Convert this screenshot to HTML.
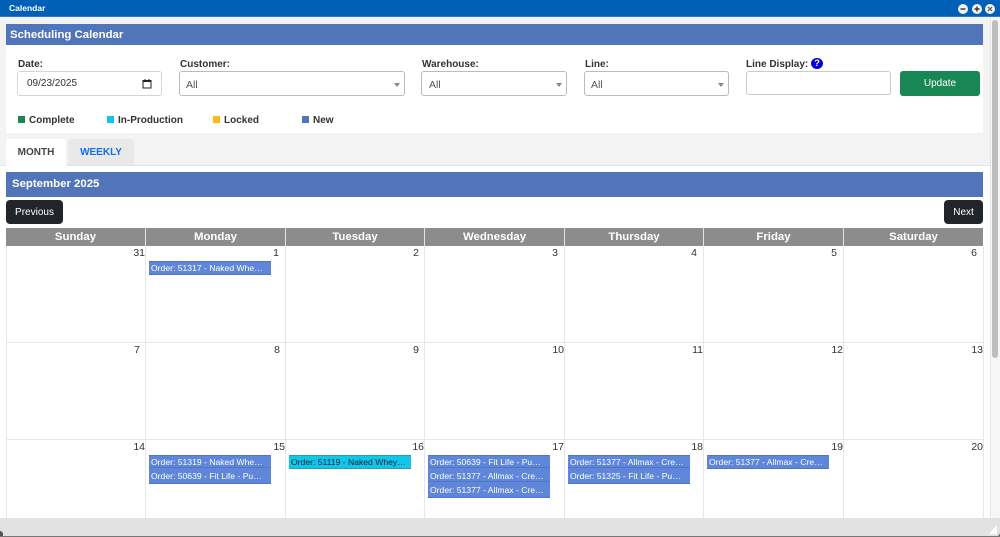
<!DOCTYPE html>
<html><head><meta charset="utf-8"><title>Calendar</title>
<style>
*{box-sizing:border-box}
html,body{margin:0;padding:0;width:1000px;height:537px;overflow:hidden;background:#fff;font-family:"Liberation Sans",sans-serif;color:#212529}
.a{position:absolute}
.lbl{position:absolute;font-size:10px;font-weight:bold;color:#333;top:58px;line-height:13px}
.inp{position:absolute;top:71px;height:25px;background:#fff;border:1px solid #d4d4d4;border-radius:3px;font-size:10.5px;color:#555;line-height:25px;padding-left:6px}
.sel{border-color:#bbb;line-height:26px}
.sel:after{content:"";position:absolute;right:4px;top:11px;border-left:3px solid transparent;border-right:3px solid transparent;border-top:4px solid #888}
.sw{position:absolute;top:116px;width:7px;height:7px}
.lg{position:absolute;top:114px;font-size:10px;font-weight:bold;color:#333;line-height:13px}
.hd{position:absolute;top:228px;height:18px;background:#8c8c8c;color:#fff;font-weight:bold;font-size:11.4px;text-align:center;line-height:19px;border-right:1px solid #e4e4e4}
.v{position:absolute;width:1px;top:246px;height:272px;background:#e6e6e6}
.h{position:absolute;left:6px;width:977px;height:1px;background:#e6e6e6}
.d{position:absolute;width:40px;text-align:right;font-size:10.5px;color:#333;line-height:13px}
.e{position:absolute;width:122px;height:14px;background:#5f86d8;border-top:1px solid #4f74c8;border-bottom:1px solid #4f74c8;color:#fff;font-size:8.6px;line-height:13px;padding-left:2px;white-space:nowrap;overflow:hidden}
.n{height:17px;padding-top:2px}
.c{background:#12c6ea;border-color:#2a9cc0;color:#123}
.btn{position:absolute;background:#212529;color:#fff;font-size:10px;border-radius:4px;text-align:center;top:200px;height:24px;line-height:25px}
</style></head><body>
<div class="a" style="left:0;top:0;width:1000px;height:537px;background:#f3f3f3"></div>

<!-- title bar -->
<div class="a" style="left:0;top:0;width:1000px;height:17px;background:#0060b6;border-bottom:1px solid #2b7ccb"></div>
<div class="a" style="left:9px;top:2px;color:#fff;font-size:8.5px;font-weight:bold;line-height:12px">Calendar</div>
<svg class="a" style="left:957px;top:3px" width="40" height="12" viewBox="0 0 40 12"><circle cx="6" cy="6" r="5" fill="#eef1f6"/><path d="M3.5 6h5" stroke="#333" stroke-width="1.4"/><circle cx="20" cy="6" r="5" fill="#eef1f6"/><path d="M17.5 6h5M20 3.5v5" stroke="#333" stroke-width="1.4"/><circle cx="33" cy="6" r="5" fill="#eef1f6"/><path d="M31 4l4 4M35 4l-4 4" stroke="#666" stroke-width="1.3"/></svg>

<!-- filter panel -->
<div class="a" style="left:6px;top:24px;width:977px;height:109px;background:#fff"></div>
<div class="a" style="left:6px;top:24px;width:977px;height:21px;background:#5274b8;color:#fff;font-weight:bold;font-size:11.4px;line-height:22px;padding-left:4px">Scheduling Calendar</div>

<div class="lbl" style="left:18px">Date:</div>
<div class="inp" style="left:17px;width:145px;color:#333;line-height:24px;padding-left:9px;font-size:10px">09/23/2025
<svg class="a" style="left:124px;top:7px" width="10" height="10" viewBox="0 0 10 10"><path d="M1 1.5h8v7.5h-8z" fill="none" stroke="#222" stroke-width="1"/><rect x="1" y="1" width="8" height="2" fill="#222"/><path d="M3 0v2M7 0v2" stroke="#222"/></svg></div>
<div class="lbl" style="left:180px">Customer:</div>
<div class="inp sel" style="left:179px;width:226px">All</div>
<div class="lbl" style="left:422px">Warehouse:</div>
<div class="inp sel" style="left:421px;width:146px;padding-left:7px">All</div>
<div class="lbl" style="left:585px">Line:</div>
<div class="inp sel" style="left:584px;width:145px">All</div>
<div class="lbl" style="left:746px">Line Display:</div>
<div class="a" style="left:811px;top:58px;width:12px;height:11px;border-radius:50%;background:#0000e0;color:#fff;font-size:9.5px;font-weight:bold;text-align:center;line-height:11px">?</div>
<div class="inp" style="left:746px;width:145px;height:24px;border-color:#ccc"></div>
<div class="a" style="left:900px;top:71px;width:80px;height:25px;background:#198754;border-radius:3px;color:#fff;font-size:10px;text-align:center;line-height:26px">Update</div>

<div class="sw" style="left:18px;background:#198754"></div><div class="lg" style="left:29px">Complete</div>
<div class="sw" style="left:107px;background:#12c6ea"></div><div class="lg" style="left:118px">In-Production</div>
<div class="sw" style="left:213px;background:#fdbb10"></div><div class="lg" style="left:224px">Locked</div>
<div class="sw" style="left:302px;background:#5274b8"></div><div class="lg" style="left:313px">New</div>

<!-- tabs -->
<div class="a" style="left:0;top:165px;width:990px;height:1px;background:#e4e4e4"></div>
<div class="a" style="left:6px;top:139px;width:60px;height:27px;background:#fff;border-radius:3px 3px 0 0;color:#444;font-size:10px;font-weight:bold;text-align:center;line-height:28px">MONTH</div>
<div class="a" style="left:68px;top:139px;width:66px;height:26px;background:#e9e9e9;border-radius:3px 3px 0 0;color:#0d6efd;font-size:10px;font-weight:bold;text-align:center;line-height:28px">WEEKLY</div>

<!-- calendar -->
<div class="a" style="left:0;top:166px;width:990px;height:352px;background:#fff"></div>
<div class="a" style="left:6px;top:172px;width:977px;height:25px;background:#5274b8;color:#fff;font-weight:bold;font-size:11.4px;line-height:25px;padding-left:6px">September 2025</div>
<div class="btn" style="left:6px;width:57px">Previous</div>
<div class="btn" style="left:944px;width:39px">Next</div>

<div class="hd" style="left:6px;width:140px">Sunday</div>
<div class="hd" style="left:146px;width:140px">Monday</div>
<div class="hd" style="left:286px;width:139px">Tuesday</div>
<div class="hd" style="left:425px;width:140px">Wednesday</div>
<div class="hd" style="left:565px;width:139px">Thursday</div>
<div class="hd" style="left:704px;width:140px">Friday</div>
<div class="hd" style="left:844px;width:139px;border-right:0">Saturday</div>

<div class="v" style="left:6px"></div><div class="v" style="left:145px"></div><div class="v" style="left:285px"></div><div class="v" style="left:424px"></div><div class="v" style="left:564px"></div><div class="v" style="left:703px"></div><div class="v" style="left:843px"></div><div class="v" style="left:983px"></div>
<div class="h" style="top:342px"></div><div class="h" style="top:439px"></div>

<div class="d" style="left:105px;top:247px">31</div><div class="d" style="left:239px;top:247px">1</div><div class="d" style="left:379px;top:247px">2</div><div class="d" style="left:518px;top:247px">3</div><div class="d" style="left:657px;top:247px">4</div><div class="d" style="left:797px;top:247px">5</div><div class="d" style="left:937px;top:247px">6</div>
<div class="d" style="left:100px;top:344px">7</div><div class="d" style="left:240px;top:344px">8</div><div class="d" style="left:379px;top:344px">9</div><div class="d" style="left:524px;top:344px">10</div><div class="d" style="left:663px;top:344px">11</div><div class="d" style="left:803px;top:344px">12</div><div class="d" style="left:943px;top:344px">13</div>
<div class="d" style="left:105px;top:441px">14</div><div class="d" style="left:245px;top:441px">15</div><div class="d" style="left:384px;top:441px">16</div><div class="d" style="left:524px;top:441px">17</div><div class="d" style="left:663px;top:441px">18</div><div class="d" style="left:803px;top:441px">19</div><div class="d" style="left:943px;top:441px">20</div>

<div class="e" style="left:149px;top:261px">Order: 51317 - Naked Whe…</div>
<div class="e" style="left:149px;top:455px">Order: 51319 - Naked Whe…</div>
<div class="e n" style="left:149px;top:467px">Order: 50639 - Fit Life - Pu…</div>
<div class="e c" style="left:289px;top:455px">Order: 51119 - Naked Whey…</div>
<div class="e" style="left:428px;top:455px">Order: 50639 - Fit Life - Pu…</div>
<div class="e n" style="left:428px;top:467px">Order: 51377 - Allmax - Cre…</div>
<div class="e n" style="left:428px;top:481px">Order: 51377 - Allmax - Cre…</div>
<div class="e" style="left:568px;top:455px">Order: 51377 - Allmax - Cre…</div>
<div class="e n" style="left:568px;top:467px">Order: 51325 - Fit Life - Pu…</div>
<div class="e" style="left:707px;top:455px">Order: 51377 - Allmax - Cre…</div>

<!-- scrollbar -->
<div class="a" style="left:990px;top:18px;width:10px;height:500px;background:#f6f6f6;border-left:1px solid #e6e6e6"></div>
<div class="a" style="left:992px;top:20px;width:6px;height:338px;background:#bdbdbd;border-radius:3px"></div>

<!-- footer -->
<div class="a" style="left:0;top:518px;width:1000px;height:18px;background:#e2e2e2"></div>
<div class="a" style="left:0;top:536px;width:1000px;height:1px;background:#777"></div>
<div class="a" style="left:0;top:531px;width:3px;height:5px;background:#555;border-radius:0 5px 0 0"></div>
<svg class="a" style="left:988px;top:522px" width="12" height="14" viewBox="0 0 12 14"><path d="M1 12L9 3v9z" fill="#fff"/><path d="M9 14h3v-4q0 4-3 4z" fill="#555"/></svg>
</body></html>
